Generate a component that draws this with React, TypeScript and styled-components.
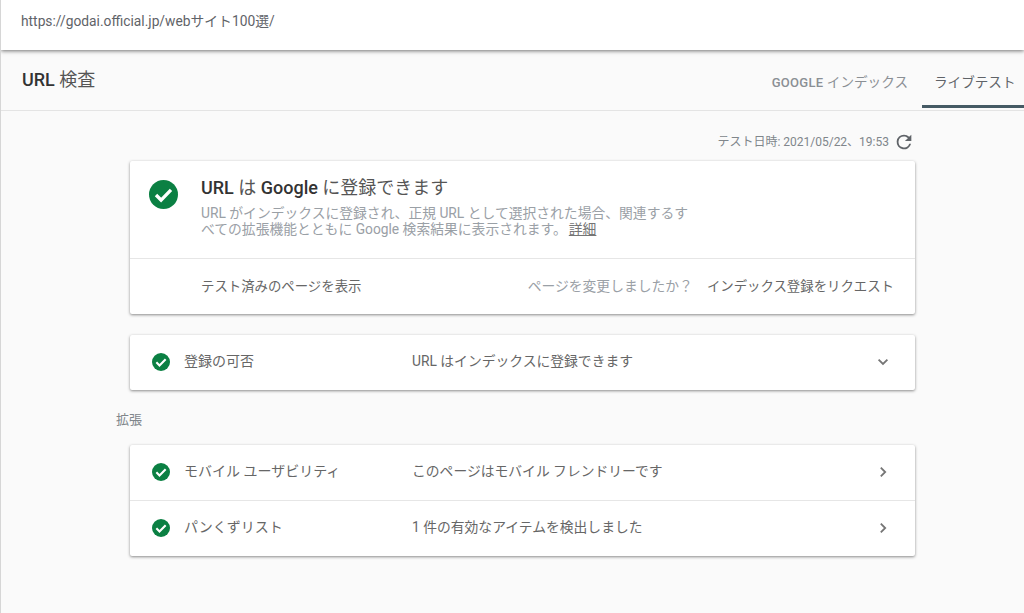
import styled, { createGlobalStyle } from "styled-components";

const FONT = `Roboto, "Noto Sans CJK JP", sans-serif`;

const GlobalStyle = createGlobalStyle`
  html, body {
    margin: 0;
    padding: 0;
    background: #fafafa;
  }
  * {
    box-sizing: border-box;
  }
`;

const CheckCircle = ({ size }: { size: number }) => (
  <svg width={size} height={size} viewBox="0 0 24 24" style={{ flexShrink: 0 }}>
    <circle cx="12" cy="12" r="12" fill="#0b8043" />
    <path d="M5.8 12.4l4.2 4.2 8.2-8.4" fill="none" stroke="#fff" strokeWidth="2.8" />
  </svg>
);

const Caret = ({ down }: { down?: boolean }) => (
  <svg width="24" height="24" viewBox="0 0 24 24">
    <path
      d={down ? "M7.6 9.6l4.4 4.4 4.4-4.4" : "M9.8 7.6l4.4 4.4-4.4 4.4"}
      fill="none"
      stroke="#757575"
      strokeWidth="1.8"
    />
  </svg>
);

const Reload = () => (
  <svg width="22" height="22" viewBox="0 0 24 24">
    <path
      fill="#5f6368"
      d="M17.65 6.35A7.96 7.96 0 0 0 12 4a8 8 0 1 0 7.73 10h-2.08A6 6 0 1 1 12 6c1.66 0 3.14.69 4.22 1.78L13 11h7V4l-2.35 2.35z"
    />
  </svg>
);

const rows = {
  status: [{ label: "登録の可否", value: "URL はインデックスに登録できます", down: true }],
  enhancements: [
    { label: "モバイル ユーザビリティ", value: "このページはモバイル フレンドリーです" },
    { label: "パンくずリスト", value: "1 件の有効なアイテムを検出しました" },
  ],
};

const App = () => {
  return (
    <Page>
      <GlobalStyle />
      <UrlBar>https://godai.official.jp/webサイト100選/</UrlBar>
      <Header>
        <Title>
          <strong>URL</strong> 検査
        </Title>
        <Tabs>
          <Tab>
            <b>GOOGLE</b> インデックス
          </Tab>
          <Tab $active>ライブテスト</Tab>
        </Tabs>
      </Header>
      <Content>
        <TestDate>
          テスト日時: 2021/05/22、19:53
          <Reload />
        </TestDate>
        <Card>
          <Summary>
            <SummaryIcon>
              <CheckCircle size={29} />
            </SummaryIcon>
            <div>
              <SummaryTitle>
                <strong>URL</strong> は <strong>Google</strong> に登録できます
              </SummaryTitle>
              <SummaryText>
                URL がインデックスに登録され、正規 URL として選択された場合、関連するす
                <br />
                べての拡張機能とともに Google 検索結果に表示されます。<DetailLink>詳細</DetailLink>
              </SummaryText>
            </div>
          </Summary>
          <Actions>
            <ActionText>テスト済みのページを表示</ActionText>
            <ActionRight>
              <Question>ページを変更しましたか？</Question>
              <ActionText>インデックス登録をリクエスト</ActionText>
            </ActionRight>
          </Actions>
        </Card>
        <Card>
          {rows.status.map((row) => (
            <Row key={row.label}>
              <CheckCircle size={18} />
              <RowLabel>{row.label}</RowLabel>
              <RowValue>{row.value}</RowValue>
              <Caret down />
            </Row>
          ))}
        </Card>
        <SectionLabel>拡張</SectionLabel>
        <Card>
          {rows.enhancements.map((row) => (
            <Row key={row.label}>
              <CheckCircle size={18} />
              <RowLabel>{row.label}</RowLabel>
              <RowValue>{row.value}</RowValue>
              <Caret />
            </Row>
          ))}
        </Card>
      </Content>
    </Page>
  );
};

const Page = styled.div`
  width: 1024px;
  height: 613px;
  overflow: hidden;
  background: #fafafa;
  border-left: 1px solid #d6d6d6;
  font-family: ${FONT};
`;

const UrlBar = styled.div`
  position: relative;
  height: 50px;
  padding: 13px 20px 0;
  background: #fff;
  color: #5f6368;
  font-size: 13.8px;
  line-height: 16px;
  box-shadow: 0 1px 4px rgba(0, 0, 0, 0.55);
`;

const Header = styled.div`
  height: 61px;
  display: flex;
  align-items: stretch;
  justify-content: space-between;
  padding-left: 21px;
  border-bottom: 1px solid #e4e4e4;
`;

const Title = styled.h1`
  margin: 18px 0 0;
  color: #555;
  font-size: 18px;
  font-weight: 400;
  line-height: 24px;

  strong {
    color: #333;
    font-weight: 500;
  }
`;

const Tabs = styled.div`
  display: flex;
  gap: 5px;
`;

const Tab = styled.div<{ $active?: boolean }>`
  padding: 23px 9px 0 ${({ $active }) => ($active ? "12px" : "9px")};
  width: ${({ $active }) => ($active ? "102px" : "auto")};
  height: 58px;
  color: ${({ $active }) => ($active ? "#5f6368" : "#8a8f94")};
  font-size: 13.6px;
  line-height: 18px;
  white-space: nowrap;
  border-bottom: 3px solid ${({ $active }) => ($active ? "#455a64" : "transparent")};

  b {
    font-size: 13px;
    font-weight: 500;
    letter-spacing: 0.3px;
  }
`;

const Content = styled.div`
  width: 785px;
  margin-left: 129px;
`;

const TestDate = styled.div`
  height: 50px;
  padding: 21px 0 0 0;
  display: flex;
  justify-content: flex-end;
  gap: 4px;
  color: #80868b;
  font-size: 12px;
  line-height: 20px;

  svg {
    margin-top: -1px;
  }
`;

const Card = styled.div`
  background: #fff;
  border-radius: 2px;
  box-shadow: 0 1px 3px rgba(0, 0, 0, 0.45);
  margin-bottom: 21px;
`;

const Summary = styled.div`
  height: 98px;
  display: flex;
  padding: 15px 0 0 19px;
  border-bottom: 1px solid #e6e6e6;
`;

const SummaryIcon = styled.div`
  width: 52px;
  padding-top: 4px;
`;

const SummaryTitle = styled.div`
  color: #555;
  font-size: 18px;
  line-height: 24px;

  strong {
    color: #333;
    font-weight: 500;
  }
`;

const SummaryText = styled.div`
  margin-top: 5px;
  color: #9aa0a6;
  font-size: 13.8px;
  line-height: 16px;
`;

const DetailLink = styled.span`
  margin-left: 2px;
  color: #757575;
  text-decoration: underline;
`;

const Actions = styled.div`
  height: 55px;
  display: flex;
  align-items: center;
  justify-content: space-between;
  padding: 0 21px 4px 71px;
`;

const ActionRight = styled.div`
  display: flex;
  gap: 14px;
`;

const ActionText = styled.span`
  color: #666;
  font-size: 13.4px;
`;

const Question = styled.span`
  color: #9aa0a6;
  font-size: 13.8px;
`;

const Row = styled.div`
  height: 55px;
  display: flex;
  align-items: center;
  padding: 0 20px 2px 22px;

  & + & {
    height: 56px;
    border-top: 1px solid #e6e6e6;
  }
`;

const RowLabel = styled.div`
  width: 228px;
  margin: -3px 0 0 14px;
  color: #666;
  font-size: 14px;
`;

const RowValue = styled.div`
  flex: 1;
  margin-top: -3px;
  color: #666;
  font-size: 13.8px;
`;

const SectionLabel = styled.div`
  height: 34px;
  color: #80868b;
  font-size: 13px;
  line-height: 18px;
  margin-left: -14px;
`;

export default App;
